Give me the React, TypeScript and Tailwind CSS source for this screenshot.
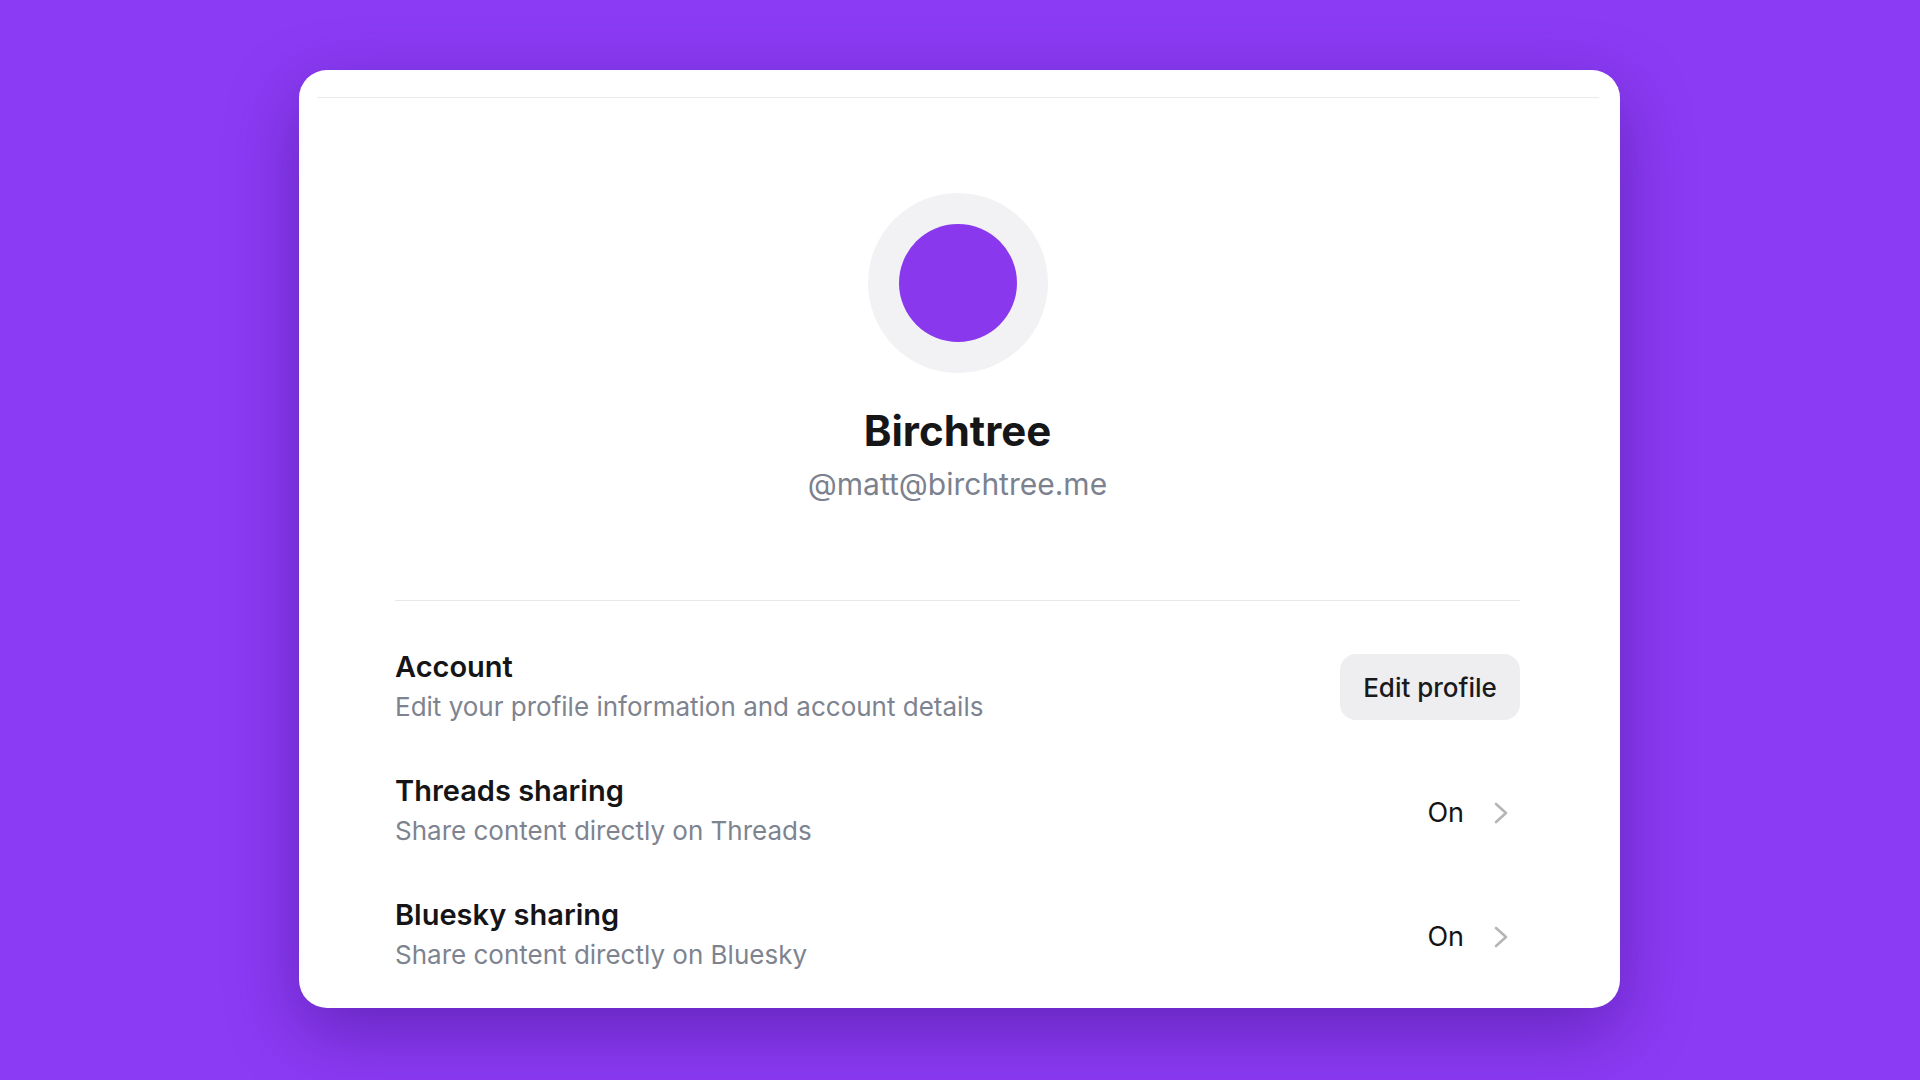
import { ReactNode } from "react";

function Chevron() {
  return (
    <svg width="14" height="22" viewBox="0 0 14 22" fill="none" className="mr-[12px]">
      <polyline
        points="2,2 12,11 2,20"
        stroke="#b4b4b9"
        strokeWidth="2.6"
        strokeLinecap="round"
        strokeLinejoin="round"
      />
    </svg>
  );
}

interface RowProps {
  title: string;
  subtitle: string;
  right: ReactNode;
}

function SettingRow({ title, subtitle, right }: RowProps) {
  return (
    <div className="flex h-[124px] items-center justify-between">
      <div className="flex flex-col">
        <span className="text-[29px] font-semibold leading-[36px] text-[#151517]">{title}</span>
        <span className="mt-[4px] text-[26px] leading-[36px] text-[#7d8490]">{subtitle}</span>
      </div>
      {right}
    </div>
  );
}

function OnToggle() {
  return (
    <div className="flex items-center gap-[30px] pt-[3px]">
      <span className="text-[27px] leading-[32px] text-[#141416]">On</span>
      <Chevron />
    </div>
  );
}

export default function App() {
  return (
    <div
      className="h-screen w-full overflow-hidden bg-[#8b3bf4] pl-[299px] pt-[70px]"
      style={{ fontFamily: "Inter, 'Noto Sans', sans-serif" }}
    >
      <div className="w-[1321px] rounded-[28px] bg-white pt-[27px] pb-[11px] shadow-[0_24px_70px_rgba(55,10,120,0.45)]">
        <div className="ml-[18px] mr-[21px] h-px bg-[#ebebee]" />

        {/* profile header */}
        <div className="flex flex-col items-center pt-[95px] pr-[4px]">
          <div className="flex h-[180px] w-[180px] items-center justify-center rounded-full bg-[#f2f2f4]">
            <div className="h-[118px] w-[118px] rounded-full bg-[#8a38ee]" />
          </div>
          <h1 className="mt-[33px] text-[42px] font-bold leading-[50px] text-[#161618]">Birchtree</h1>
          <p className="mt-[10px] text-[30px] leading-[36px] text-[#7b818e]">@matt@birchtree.me</p>
        </div>

        <div className="ml-[96px] mr-[100px] mt-[98px]">
          <div className="h-px bg-[#e8e8eb]" />
          <div className="mt-[24px]">
            <SettingRow
              title="Account"
              subtitle="Edit your profile information and account details"
              right={
                <button className="h-[66px] w-[180px] rounded-[16px] bg-[#eeeef1] text-[26px] font-medium text-[#1a1a1c]">
                  Edit profile
                </button>
              }
            />
            <SettingRow
              title="Threads sharing"
              subtitle="Share content directly on Threads"
              right={<OnToggle />}
            />
            <SettingRow
              title="Bluesky sharing"
              subtitle="Share content directly on Bluesky"
              right={<OnToggle />}
            />
          </div>
        </div>
      </div>
    </div>
  );
}
